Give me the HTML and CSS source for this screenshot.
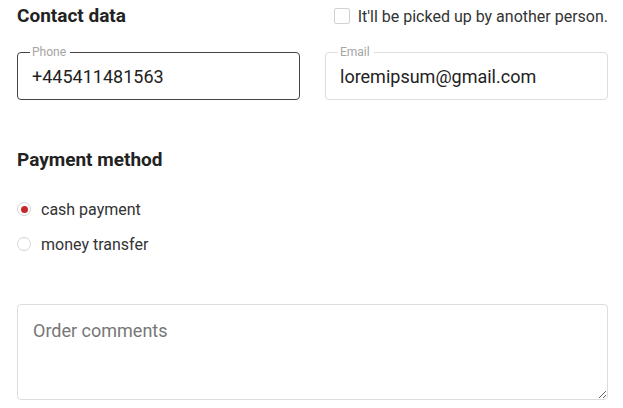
FILE: index.html
```html
<!DOCTYPE html>
<html lang="en">
<head>
  <meta charset="UTF-8" />
  <meta name="viewport" content="width=device-width, initial-scale=1.0" />
  <title>Checkout</title>
  <link rel="stylesheet" href="styles.css">
</head>
<body>

  <form class="order">
    <div class="section-head">
      <h2>Contact data</h2>
      <label class="check">
        <input type="checkbox" name="other_person" />
        <span>It'll be picked up by another person.</span>
      </label>
    </div>

    <div class="fields">
      <fieldset class="field active">
        <legend>Phone</legend>
        <input type="text" name="phone" value="+445411481563" />
      </fieldset>
      <fieldset class="field">
        <legend>Email</legend>
        <input type="text" name="email" value="loremipsum@gmail.com" />
      </fieldset>
    </div>

    <h2 class="payment-title">Payment method</h2>

    <div class="radios">
      <label class="radio">
        <input type="radio" name="payment" value="cash" checked />
        <span>cash payment</span>
      </label>
      <label class="radio">
        <input type="radio" name="payment" value="transfer" />
        <span>money transfer</span>
      </label>
    </div>

    <textarea name="comments" placeholder="Order comments"></textarea>
  </form>

</body>
</html>
```

FILE: styles.css
```css
body {
  font-family: Roboto, 'Noto Sans', sans-serif;
  color: #222;
  background: #fff;
  margin: 0;
  padding: 0 15px 0 17px;
}
h2 {
  font-size: 19px;
  font-weight: 700;
  margin: 0;
  color: #222;
  line-height: 24px;
}
.section-head {
  display: flex;
  justify-content: space-between;
  align-items: center;
  height: 32px;
}
.check {
  display: flex;
  align-items: center;
  gap: 8px;
  font-size: 16px;
  color: #333;
}
.check input {
  appearance: none;
  width: 16px;
  height: 16px;
  margin: 0;
  border: 1px solid #d2d2d2;
  border-radius: 2px;
  background: #fff;
}
.fields {
  display: grid;
  grid-template-columns: 1fr 1fr;
  gap: 25px;
  margin-top: 14px;
}
.field {
  margin: 0;
  padding: 0 14px;
  border: 1px solid #ddd;
  border-radius: 4px;
  height: 54px;
  box-sizing: border-box;
  min-width: 0;
}
.field.active {
  border-color: #444;
}
.field legend {
  font-size: 12px;
  color: #a5a5a5;
  padding: 0 4px 0 2px;
  margin-left: -2px;
  line-height: 12px;
}
.field input {
  border: 0;
  outline: none;
  padding: 0;
  width: 100%;
  font-family: inherit;
  font-size: 18px;
  color: #222;
  background: transparent;
  line-height: 24px;
  margin: 7px 0 0;
}
.payment-title {
  margin-top: 48px;
}
.radios {
  display: flex;
  flex-direction: column;
  gap: 15px;
  margin-top: 27px;
}
.radio {
  display: flex;
  align-items: center;
  gap: 10px;
  font-size: 16px;
  color: #333;
  height: 20px;
}
.radio input {
  appearance: none;
  width: 14px;
  height: 14px;
  margin: 0;
  border: 1px solid #d4d4d4;
  border-radius: 50%;
  background: #fff;
  display: grid;
  place-content: center;
}
.radio input:checked::before {
  content: "";
  width: 7px;
  height: 7px;
  border-radius: 50%;
  background: #c62828;
}
textarea {
  display: block;
  width: 100%;
  box-sizing: border-box;
  height: 96px;
  margin-top: 50px;
  border: 1px solid #ddd;
  border-radius: 4px;
  padding: 15px 15px 13px;
  font-family: inherit;
  font-size: 18px;
  color: #222;
  outline: none;
}
textarea::placeholder {
  color: #777;
}
```
